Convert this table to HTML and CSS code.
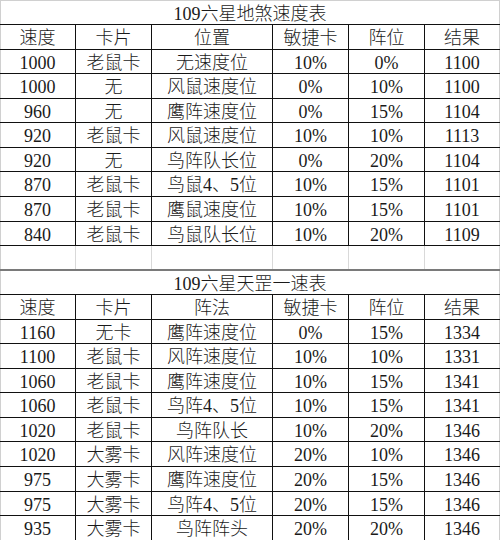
FILE: index.html
```html
<!DOCTYPE html>
<html lang="zh">
<head>
<meta charset="utf-8">
<title>109六星速度表</title>
<link rel="stylesheet" href="styles.css">
</head>
<body>
<div class="sheet">
  <div class="row title tall top"><div class="cell span">109六星地煞速度表</div></div>
  <div class="row tall"><div class="cell">速度</div><div class="cell">卡片</div><div class="cell">位置</div><div class="cell">敏捷卡</div><div class="cell">阵位</div><div class="cell">结果</div></div>
  <div class="row"><div class="cell">1000</div><div class="cell">老鼠卡</div><div class="cell">无速度位</div><div class="cell">10%</div><div class="cell">0%</div><div class="cell">1100</div></div>
  <div class="row tall"><div class="cell">1000</div><div class="cell">无</div><div class="cell">风鼠速度位</div><div class="cell">0%</div><div class="cell">10%</div><div class="cell">1100</div></div>
  <div class="row"><div class="cell">960</div><div class="cell">无</div><div class="cell">鹰阵速度位</div><div class="cell">0%</div><div class="cell">15%</div><div class="cell">1104</div></div>
  <div class="row tall"><div class="cell">920</div><div class="cell">老鼠卡</div><div class="cell">风鼠速度位</div><div class="cell">10%</div><div class="cell">10%</div><div class="cell">1113</div></div>
  <div class="row"><div class="cell">920</div><div class="cell">无</div><div class="cell">鸟阵队长位</div><div class="cell">0%</div><div class="cell">20%</div><div class="cell">1104</div></div>
  <div class="row tall"><div class="cell">870</div><div class="cell">老鼠卡</div><div class="cell">鸟鼠4、5位</div><div class="cell">10%</div><div class="cell">15%</div><div class="cell">1101</div></div>
  <div class="row tall"><div class="cell">870</div><div class="cell">老鼠卡</div><div class="cell">鹰鼠速度位</div><div class="cell">10%</div><div class="cell">15%</div><div class="cell">1101</div></div>
  <div class="row"><div class="cell">840</div><div class="cell">老鼠卡</div><div class="cell">鸟鼠队长位</div><div class="cell">10%</div><div class="cell">20%</div><div class="cell">1109</div></div>
  <div class="row blank tall"><div class="cell"></div><div class="cell"></div><div class="cell"></div><div class="cell"></div><div class="cell"></div><div class="cell"></div></div>
  <div class="row title"><div class="cell span">109六星天罡一速表</div></div>
  <div class="row tall"><div class="cell">速度</div><div class="cell">卡片</div><div class="cell">阵法</div><div class="cell">敏捷卡</div><div class="cell">阵位</div><div class="cell">结果</div></div>
  <div class="row"><div class="cell">1160</div><div class="cell">无卡</div><div class="cell">鹰阵速度位</div><div class="cell">0%</div><div class="cell">15%</div><div class="cell">1334</div></div>
  <div class="row tall"><div class="cell">1100</div><div class="cell">老鼠卡</div><div class="cell">风阵速度位</div><div class="cell">10%</div><div class="cell">10%</div><div class="cell">1331</div></div>
  <div class="row"><div class="cell">1060</div><div class="cell">老鼠卡</div><div class="cell">鹰阵速度位</div><div class="cell">10%</div><div class="cell">15%</div><div class="cell">1341</div></div>
  <div class="row tall"><div class="cell">1060</div><div class="cell">老鼠卡</div><div class="cell">鸟阵4、5位</div><div class="cell">10%</div><div class="cell">15%</div><div class="cell">1341</div></div>
  <div class="row"><div class="cell">1020</div><div class="cell">老鼠卡</div><div class="cell">鸟阵队长</div><div class="cell">10%</div><div class="cell">20%</div><div class="cell">1346</div></div>
  <div class="row tall"><div class="cell">1020</div><div class="cell">大雾卡</div><div class="cell">风阵速度位</div><div class="cell">20%</div><div class="cell">10%</div><div class="cell">1346</div></div>
  <div class="row tall"><div class="cell">975</div><div class="cell">大雾卡</div><div class="cell">鹰阵速度位</div><div class="cell">20%</div><div class="cell">15%</div><div class="cell">1346</div></div>
  <div class="row"><div class="cell">975</div><div class="cell">大雾卡</div><div class="cell">鸟阵4、5位</div><div class="cell">20%</div><div class="cell">15%</div><div class="cell">1346</div></div>
  <div class="row tall"><div class="cell">935</div><div class="cell">大雾卡</div><div class="cell">鸟阵阵头</div><div class="cell">20%</div><div class="cell">20%</div><div class="cell">1346</div></div>
</div>
</body>
</html>
```
FILE: styles.css
```css
html, body {
  margin: 0;
  padding: 0;
  background: #ffffff;
}

.sheet {
  width: 500px;
  font-family: "Liberation Serif", "Noto Sans CJK SC", serif;
  font-size: 18px;
  font-weight: 300;
  color: #1a1a1a;
}

.row {
  display: grid;
  grid-template-columns: 76px 76px 121px 76px 76px 75px;
  height: 24px;
  box-sizing: border-box;
  border-bottom: 1px solid #111111;
  box-shadow: inset 1px 0 #d0d0d0, inset -1px 0 #d0d0d0;
}

.row.tall {
  height: 25px;
}

.row.top {
  border-top: 1px solid #d0d0d0;
}

.cell {
  box-sizing: border-box;
  border-right: 1px solid #111111;
  display: flex;
  align-items: center;
  justify-content: center;
  line-height: 1;
  white-space: nowrap;
  padding-top: 2px;
}

.cell:last-child {
  border-right: 1px solid #d0d0d0;
}

.row.title .cell.span {
  grid-column: 1 / -1;
  border-right: none;
}

.row.blank {
  border-bottom: 2px solid #7a7a7a;
}

.row.blank .cell {
  border-right-color: #d9d9d9;
}
```
